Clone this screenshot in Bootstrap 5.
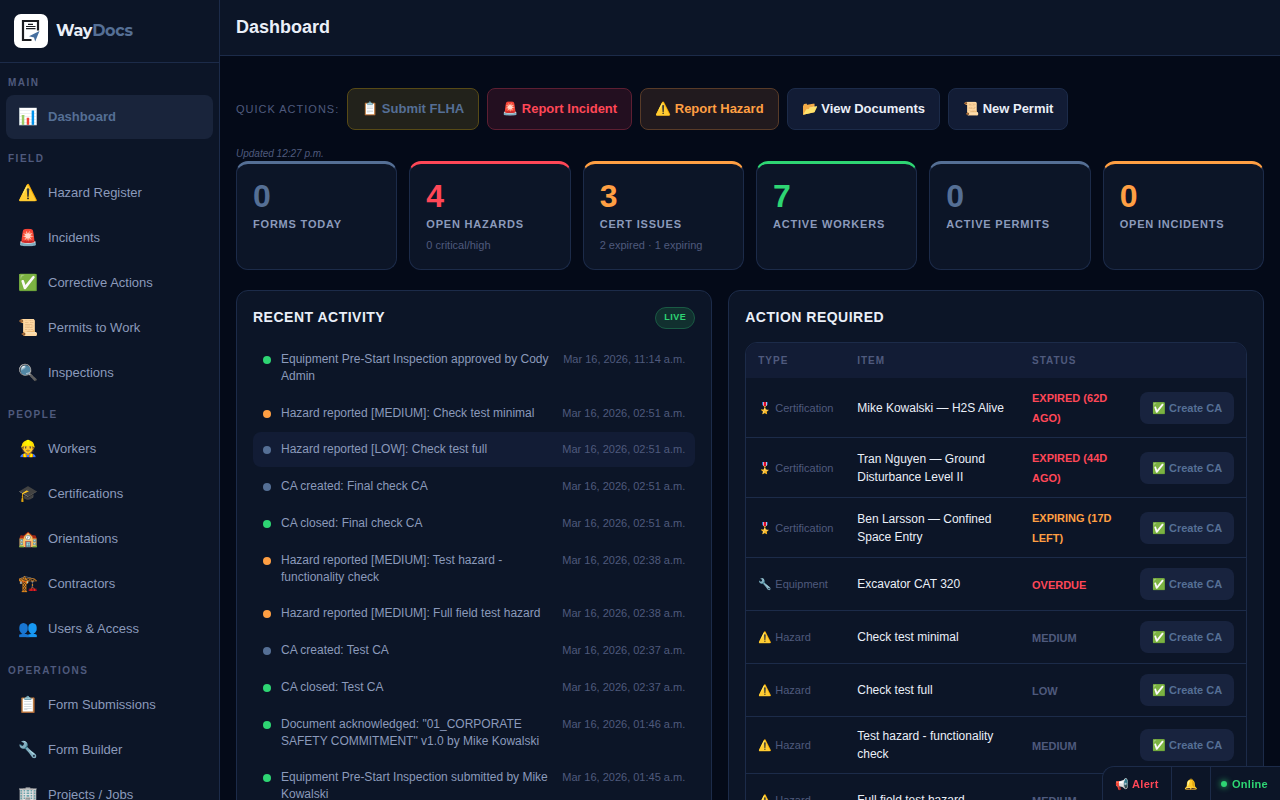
<!DOCTYPE html>
<html lang="en">
<head>
<meta charset="utf-8">
<meta name="viewport" content="width=device-width, initial-scale=1">
<title>WayDocs – Dashboard</title>
<link rel="stylesheet" href="https://cdn.jsdelivr.net/npm/bootstrap@5.3.0/dist/css/bootstrap.min.css">
<style>
:root{--bg:#040a18;--panel:#0c1527;--raised:#121c35;--line:#1c2b49;--steel:#556f95;--muted:#4f5a7d;--soft:#8b9abb;--bright:#eaeff8;--red:#ff4757;--orange:#ff9f43;--green:#2ed573}
body{background:var(--bg);color:var(--bright);font-family:"Liberation Sans",Arial,sans-serif;font-size:13px;line-height:1.5}
.c-steel{color:var(--steel)}.c-red{color:var(--red)}.c-orange{color:var(--orange)}.c-green{color:var(--green)}.c-muted{color:var(--muted)}
.scroller{overflow-x:hidden;overflow-y:auto;scrollbar-width:none}
.scroller::-webkit-scrollbar{display:none}
.sidebar{width:220px;background:var(--panel);border-right:1px solid var(--line)}
.brand{height:63px;padding:0 14px;border-bottom:1px solid var(--line);color:var(--bright);font:700 16px/24px Montserrat,"Open Sans",sans-serif;letter-spacing:-.3px}
.side-nav{padding:1px 6px;gap:1px;flex-wrap:nowrap}
.side-label{height:30px;padding:11px 2px 4px;font-size:10px;line-height:15px;font-weight:700;letter-spacing:1.5px;color:var(--muted);flex:none}
.side-link{height:44px;padding:0 12px;gap:10px;border-radius:8px;color:var(--soft);flex:none}
.side-link:hover{color:var(--bright)}
.side-link.active{background:#19243b;color:var(--steel);font-weight:700}
.side-icon{width:20px;font-size:16px;line-height:20px;text-align:center;white-space:nowrap}
.topbar{height:56px;padding:0 16px 2px;background:var(--panel);border-bottom:1px solid var(--line)}
.topbar h1{font-size:18px;line-height:24px}
.content{padding:32px 16px 0}
.quick-label{font-size:11px;letter-spacing:1px;color:var(--muted)}
.quick{height:42px;padding:0 14px;border:1px solid var(--line);border-radius:8px;background:var(--raised);color:var(--bright);font-size:13px;font-weight:700}
.quick.q-form{background:#22221b;border-color:#574a16;color:var(--steel)}
.quick.q-incident{background:#230f20;border-color:#5d1f32;color:var(--red)}
.quick.q-hazard{background:#211a1e;border-color:#583b28;color:var(--orange)}
.updated{margin-top:16px;font-size:10px;line-height:15px;font-style:italic;color:var(--muted)}
.stats{display:grid;grid-template-columns:repeat(6,1fr);gap:12px}
.stat{padding:16px;border:1px solid var(--line);border-top:3px solid currentColor;border-radius:12px;background:var(--panel);min-height:109px}
.stat-num{font-size:32px;line-height:32px;font-weight:700}
.stat-name{margin-top:4px;font-size:11px;line-height:17px;font-weight:700;letter-spacing:.8px;color:var(--soft)}
.stat-sub{margin-top:4px;font-size:11px;line-height:16px;color:var(--muted)}
.panels{display:grid;grid-template-columns:8fr 9fr;gap:16px;margin-top:20px;align-items:start}
.panel{padding:16px;border:1px solid var(--line);border-radius:12px;background:var(--panel)}
.panel-head{height:22px;margin-bottom:13px}
.panel h2{font-size:14px;line-height:20px;font-weight:700;letter-spacing:.5px}
.live{padding:0 8px;height:22px;line-height:19px;border:1px solid #1a5a44;border-radius:11px;background:#11302f;color:var(--green);font-size:9px;font-weight:700;letter-spacing:.5px}
.feed{gap:2px}
.feed li{padding:9px 10px;gap:10px;border-radius:8px;font-size:12px;line-height:1.4;color:var(--soft)}
.feed li.current{background:var(--raised)}
.feed time{margin-left:auto;padding-top:1px;font-size:11px;white-space:nowrap;color:var(--muted)}
.dot{width:8px;height:8px;border-radius:50%;background:currentColor;flex:none;margin-top:5px}
.grid-box{border:1px solid var(--line);border-radius:12px;overflow:hidden}
.todo{width:100%;table-layout:fixed;font-size:12px;line-height:18px}
.todo th{height:35px;padding:0 12px;background:var(--raised);font-size:10px;letter-spacing:1px;color:var(--muted)}
.todo td{padding:10px 12px;vertical-align:middle;border-bottom:1px solid var(--line)}
.todo .kind{font-size:11px;color:var(--muted);white-space:nowrap}
.todo .state{padding:10px 12px 9px;font-size:11px;line-height:20px;font-weight:700}
.col-kind{width:99px}.col-state{width:108px}.col-act{width:118px}
.fix{display:block;width:100%;height:32px;padding:0;border:0;border-radius:8px;background:#18233e;color:var(--steel);font-size:11px;font-weight:700;white-space:nowrap}
.dock{position:fixed;right:0;bottom:0;height:34px;background:var(--panel);border:1px solid var(--line);border-width:1px 0 0 1px;border-radius:12px 0 0 0;overflow:hidden}
.dock button{padding:2px 12px 0;border:0;background:none;font-size:11px;font-weight:700;letter-spacing:.3px}
.dock button+button{border-left:1px solid var(--line)}
.dock .signal{padding:2px 12px 0 10px}
.pulse{display:inline-block;width:6px;height:6px;margin-right:5px;border-radius:50%;background:var(--green);box-shadow:0 0 6px var(--green);vertical-align:1px}
</style>
</head>
<body>
<div class="d-flex vh-100 overflow-hidden">
<aside class="sidebar d-flex flex-column flex-shrink-0">
<a href="#" class="brand d-flex align-items-center gap-2 text-decoration-none flex-shrink-0">
<svg width="34" height="34" viewBox="0 0 34 34" aria-hidden="true"><rect width="34" height="34" rx="7" fill="#fff"/><path d="M24 16.500V7H9v19h8.500" fill="none" stroke="#1b1c1f" stroke-width="2.200"/><path d="M14 10.300h5M12 12.500h9.500M12 14.600h9.500" stroke="#1b1c1f" stroke-width="1.200"/><path d="M25.500 17l-10.500 5.200 5 1.300 1.200 4z" fill="#47709f"/></svg>
<span>Way<span class="c-steel">Docs</span></span></a>
<nav class="side-nav scroller nav flex-column" aria-label="Main">
<div class="side-label">MAIN</div>
<a href="#" class="side-link active d-flex align-items-center text-decoration-none"><span class="side-icon">📊</span>Dashboard</a>
<div class="side-label">FIELD</div>
<a href="#" class="side-link d-flex align-items-center text-decoration-none"><span class="side-icon">⚠️</span>Hazard Register</a>
<a href="#" class="side-link d-flex align-items-center text-decoration-none"><span class="side-icon">🚨</span>Incidents</a>
<a href="#" class="side-link d-flex align-items-center text-decoration-none"><span class="side-icon">✅</span>Corrective Actions</a>
<a href="#" class="side-link d-flex align-items-center text-decoration-none"><span class="side-icon">📜</span>Permits to Work</a>
<a href="#" class="side-link d-flex align-items-center text-decoration-none"><span class="side-icon">🔍</span>Inspections</a>
<div class="side-label">PEOPLE</div>
<a href="#" class="side-link d-flex align-items-center text-decoration-none"><span class="side-icon">👷</span>Workers</a>
<a href="#" class="side-link d-flex align-items-center text-decoration-none"><span class="side-icon">🎓</span>Certifications</a>
<a href="#" class="side-link d-flex align-items-center text-decoration-none"><span class="side-icon">🏫</span>Orientations</a>
<a href="#" class="side-link d-flex align-items-center text-decoration-none"><span class="side-icon">🏗️</span>Contractors</a>
<a href="#" class="side-link d-flex align-items-center text-decoration-none"><span class="side-icon">👥</span>Users &amp; Access</a>
<div class="side-label">OPERATIONS</div>
<a href="#" class="side-link d-flex align-items-center text-decoration-none"><span class="side-icon">📋</span>Form Submissions</a>
<a href="#" class="side-link d-flex align-items-center text-decoration-none"><span class="side-icon">🔧</span>Form Builder</a>
<a href="#" class="side-link d-flex align-items-center text-decoration-none"><span class="side-icon">🏢</span>Projects / Jobs</a>
</nav>
</aside>
<div class="d-flex flex-column flex-grow-1 overflow-hidden">
<header class="topbar d-flex align-items-center flex-shrink-0"><h1 class="fw-bold mb-0">Dashboard</h1></header>
<main class="content scroller flex-grow-1">
<div class="d-flex flex-wrap align-items-center gap-2">
<span class="quick-label">QUICK ACTIONS:</span>
<button type="button" class="quick q-form">📋 Submit FLHA</button>
<button type="button" class="quick q-incident">🚨 Report Incident</button>
<button type="button" class="quick q-hazard">⚠️ Report Hazard</button>
<button type="button" class="quick">📂 View Documents</button>
<button type="button" class="quick">📜 New Permit</button>
</div>
<div class="updated">Updated 12:27 p.m.</div>
<section class="stats">
<div class="stat c-steel"><div class="stat-num">0</div><div class="stat-name">FORMS TODAY</div></div>
<div class="stat c-red"><div class="stat-num">4</div><div class="stat-name">OPEN HAZARDS</div><div class="stat-sub">0 critical/high</div></div>
<div class="stat c-orange"><div class="stat-num">3</div><div class="stat-name">CERT ISSUES</div><div class="stat-sub">2 expired · 1 expiring</div></div>
<div class="stat c-green"><div class="stat-num">7</div><div class="stat-name">ACTIVE WORKERS</div></div>
<div class="stat c-steel"><div class="stat-num">0</div><div class="stat-name">ACTIVE PERMITS</div></div>
<div class="stat c-orange"><div class="stat-num">0</div><div class="stat-name">OPEN INCIDENTS</div></div>
</section>
<div class="panels">
<section class="panel">
<div class="panel-head d-flex align-items-start justify-content-between"><h2 class="mb-0">RECENT ACTIVITY</h2><span class="live">LIVE</span></div>
<ul class="feed list-unstyled d-flex flex-column mb-0">
<li class="d-flex"><i class="dot c-green"></i><span>Equipment Pre-Start Inspection approved by Cody Admin</span><time>Mar 16, 2026, 11:14 a.m.</time></li>
<li class="d-flex"><i class="dot c-orange"></i><span>Hazard reported [MEDIUM]: Check test minimal</span><time>Mar 16, 2026, 02:51 a.m.</time></li>
<li class="d-flex current"><i class="dot c-steel"></i><span>Hazard reported [LOW]: Check test full</span><time>Mar 16, 2026, 02:51 a.m.</time></li>
<li class="d-flex"><i class="dot c-steel"></i><span>CA created: Final check CA</span><time>Mar 16, 2026, 02:51 a.m.</time></li>
<li class="d-flex"><i class="dot c-green"></i><span>CA closed: Final check CA</span><time>Mar 16, 2026, 02:51 a.m.</time></li>
<li class="d-flex"><i class="dot c-orange"></i><span>Hazard reported [MEDIUM]: Test hazard - functionality check</span><time>Mar 16, 2026, 02:38 a.m.</time></li>
<li class="d-flex"><i class="dot c-orange"></i><span>Hazard reported [MEDIUM]: Full field test hazard</span><time>Mar 16, 2026, 02:38 a.m.</time></li>
<li class="d-flex"><i class="dot c-steel"></i><span>CA created: Test CA</span><time>Mar 16, 2026, 02:37 a.m.</time></li>
<li class="d-flex"><i class="dot c-green"></i><span>CA closed: Test CA</span><time>Mar 16, 2026, 02:37 a.m.</time></li>
<li class="d-flex"><i class="dot c-green"></i><span>Document acknowledged: "01_CORPORATE SAFETY COMMITMENT" v1.0 by Mike Kowalski</span><time>Mar 16, 2026, 01:46 a.m.</time></li>
<li class="d-flex"><i class="dot c-green"></i><span>Equipment Pre-Start Inspection submitted by Mike Kowalski</span><time>Mar 16, 2026, 01:45 a.m.</time></li>
</ul>
</section>
<section class="panel">
<div class="panel-head"><h2 class="mb-0">ACTION REQUIRED</h2></div>
<div class="grid-box">
<table class="todo">
<colgroup><col class="col-kind"><col><col class="col-state"><col class="col-act"></colgroup>
<thead><tr><th scope="col">TYPE</th><th scope="col">ITEM</th><th scope="col">STATUS</th><th scope="col" aria-label="Action"></th></tr></thead>
<tbody>
<tr><td class="kind">🎖️ Certification</td><td>Mike Kowalski — H2S Alive</td><td class="state c-red">EXPIRED (62D AGO)</td><td><button type="button" class="fix">✅ Create CA</button></td></tr>
<tr><td class="kind">🎖️ Certification</td><td>Tran Nguyen — Ground Disturbance Level II</td><td class="state c-red">EXPIRED (44D AGO)</td><td><button type="button" class="fix">✅ Create CA</button></td></tr>
<tr><td class="kind">🎖️ Certification</td><td>Ben Larsson — Confined Space Entry</td><td class="state c-orange">EXPIRING (17D LEFT)</td><td><button type="button" class="fix">✅ Create CA</button></td></tr>
<tr><td class="kind">🔧 Equipment</td><td>Excavator CAT 320</td><td class="state c-red">OVERDUE</td><td><button type="button" class="fix">✅ Create CA</button></td></tr>
<tr><td class="kind">⚠️ Hazard</td><td>Check test minimal</td><td class="state c-muted">MEDIUM</td><td><button type="button" class="fix">✅ Create CA</button></td></tr>
<tr><td class="kind">⚠️ Hazard</td><td>Check test full</td><td class="state c-muted">LOW</td><td><button type="button" class="fix">✅ Create CA</button></td></tr>
<tr><td class="kind">⚠️ Hazard</td><td>Test hazard - functionality check</td><td class="state c-muted">MEDIUM</td><td><button type="button" class="fix">✅ Create CA</button></td></tr>
<tr><td class="kind">⚠️ Hazard</td><td>Full field test hazard</td><td class="state c-muted">MEDIUM</td><td><button type="button" class="fix">✅ Create CA</button></td></tr>
</tbody>
</table>
</div>
</section>
</div>
</main>
</div>
</div>
<div class="dock d-flex">
<button type="button" class="c-red">📢 Alert</button>
<button type="button" aria-label="Notifications">🔔</button>
<button type="button" class="signal c-green"><span class="pulse"></span>Online</button>
</div>
<script src="https://cdn.jsdelivr.net/npm/bootstrap@5.3.0/dist/js/bootstrap.bundle.min.js"></script>
</body>
</html>
